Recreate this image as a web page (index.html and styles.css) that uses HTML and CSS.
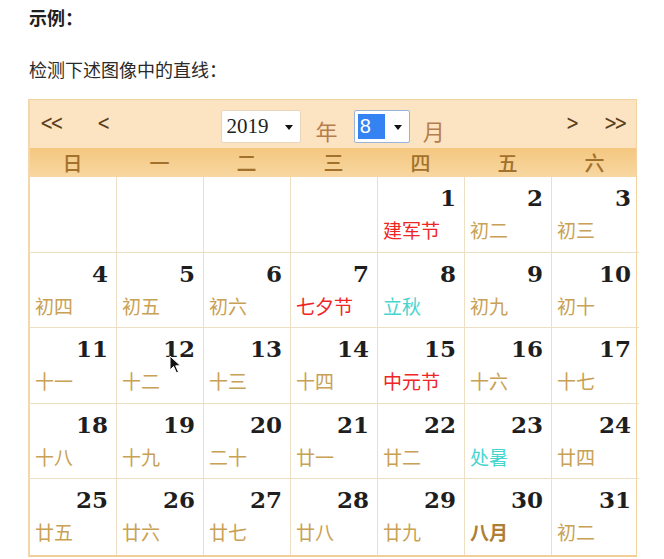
FILE: index.html
```html
<!DOCTYPE html>
<html lang="zh">
<head>
<meta charset="utf-8">
<link rel="stylesheet" href="styles.css">
</head>
<body>
<div class="page">
  <p class="title">示例：</p>
  <p class="desc">检测下述图像中的直线：</p>
  <div class="cal">
    <div class="head">
      <div class="nav left"><span class="dbl">&lt;&lt;</span><span class="sgl">&lt;</span></div>
      <div class="pick">
        <div class="sel year"><span>2019</span><i class="caret"></i></div>
        <span class="unit">年</span>
        <div class="sel month"><span class="hl">8</span><i class="caret"></i></div>
        <span class="unit unit-m">月</span>
      </div>
      <div class="nav right"><span class="sgl">&gt;</span><span class="dbl">&gt;&gt;</span></div>
    </div>
    <div class="week">
      <span>日</span><span>一</span><span>二</span><span>三</span><span>四</span><span>五</span><span>六</span>
    </div>
    <div class="grid">
      <div class="cell"></div><div class="cell"></div><div class="cell"></div><div class="cell"></div>
      <div class="cell"><b>1</b><em class="fest">建军节</em></div>
      <div class="cell"><b>2</b><em>初二</em></div>
      <div class="cell"><b>3</b><em>初三</em></div>

      <div class="cell"><b>4</b><em>初四</em></div>
      <div class="cell"><b>5</b><em>初五</em></div>
      <div class="cell"><b>6</b><em>初六</em></div>
      <div class="cell"><b>7</b><em class="fest">七夕节</em></div>
      <div class="cell"><b>8</b><em class="term">立秋</em></div>
      <div class="cell"><b>9</b><em>初九</em></div>
      <div class="cell"><b>10</b><em>初十</em></div>

      <div class="cell"><b>11</b><em>十一</em></div>
      <div class="cell"><b>12</b><em>十二</em></div>
      <div class="cell"><b>13</b><em>十三</em></div>
      <div class="cell"><b>14</b><em>十四</em></div>
      <div class="cell"><b>15</b><em class="fest">中元节</em></div>
      <div class="cell"><b>16</b><em>十六</em></div>
      <div class="cell"><b>17</b><em>十七</em></div>

      <div class="cell"><b>18</b><em>十八</em></div>
      <div class="cell"><b>19</b><em>十九</em></div>
      <div class="cell"><b>20</b><em>二十</em></div>
      <div class="cell"><b>21</b><em>廿一</em></div>
      <div class="cell"><b>22</b><em>廿二</em></div>
      <div class="cell"><b>23</b><em class="term">处暑</em></div>
      <div class="cell"><b>24</b><em>廿四</em></div>

      <div class="cell"><b>25</b><em>廿五</em></div>
      <div class="cell"><b>26</b><em>廿六</em></div>
      <div class="cell"><b>27</b><em>廿七</em></div>
      <div class="cell"><b>28</b><em>廿八</em></div>
      <div class="cell"><b>29</b><em>廿九</em></div>
      <div class="cell"><b>30</b><em class="month-start">八月</em></div>
      <div class="cell"><b>31</b><em>初二</em></div>
    </div>
    <svg class="cursor" width="14" height="20" viewBox="0 0 14 20"><path d="M1 1 L1 15 L4.5 11.5 L7.5 18 L9.5 17 L6.7 10.8 L11.5 10.8 Z" fill="#111" stroke="#fff" stroke-width="1"/></svg>
  </div>
</div>
</body>
</html>
```
FILE: styles.css
```css
* { box-sizing: border-box; }
html, body { margin: 0; padding: 0; background: #fff; }
body { font-family: "Noto Sans CJK SC", "Noto Sans", sans-serif; color: #222; }
.page { width: 664px; height: 559px; overflow: hidden; padding-top: 4px; }
.title { margin: 0 0 0 29px; font-size: 18px; font-weight: 700; line-height: 26px; color: #1e1e1e; }
.desc { margin: 26px 0 0 29px; font-size: 18px; line-height: 26px; color: #2a2a2a; }

.cal {
  position: relative;
  margin: 17px 0 0 28px;
  width: 609px;
  border: 1px solid #f2d3a0;
  border-bottom: 2px solid #f2cf98;
  border-left: 2px solid #f4d7a8;
}
.head {
  height: 48px;
  background: #fce4c2;
  display: flex;
  align-items: center;
  justify-content: space-between;
  padding: 0 8px 0 10px;
}
.nav { display: flex; align-items: center; color: #5b3f1c; font-family: "DejaVu Sans", sans-serif; font-size: 21px; line-height: 1; }
.nav.left .dbl { letter-spacing: -4px; width: 57px; }
.nav.right .sgl { width: 38px; }
.nav.right .dbl { letter-spacing: -4px; width: 24px; }
.nav span { transform: scaleX(0.75); transform-origin: left center; display: inline-block; padding-bottom: 2px; }
.pick { display: flex; align-items: center; margin-left: 106px; margin-right: auto; padding-top: 8px; }
.sel {
  height: 33px;
  background: #fff;
  border: 1px solid #e8d6ba;
  border-radius: 2px;
  display: flex;
  align-items: center;
  font-family: "Liberation Serif", serif;
  font-size: 21px;
  color: #222;
  position: relative;
  top: -2px;
}
.sel.year { width: 80px; padding-left: 5px; }
.sel.month { width: 56px; padding-left: 3px; border-color: #9ab3d8; }
.caret { position: absolute; right: 7px; top: 14px; width: 0; height: 0; border-left: 4px solid transparent; border-right: 4px solid transparent; border-top: 5px solid #111; }
.hl { background: #3583f2; color: #fff; width: 27px; height: 25px; line-height: 25px; padding-left: 2px; font-family: "Liberation Sans", sans-serif; font-size: 20px; }
.unit { font-size: 22px; color: #b67d4c; margin: 0 16px 0 15px; line-height: 1; position: relative; top: 2px; }
.unit-m { margin: 0 0 0 13px; }

.week {
  height: 29px;
  background: linear-gradient(#f4c77f, #f8d7a2);
  display: grid;
  grid-template-columns: repeat(7, 87px);
  align-items: center;
  text-align: center;
  color: #a2712c;
  font-size: 20px;
  font-weight: 500;
  line-height: 1;
}
.week span { padding-right: 2px; }
.grid { display: grid; grid-template-columns: repeat(7, 87px); grid-auto-rows: 75.6px; }
.cell {
  border-right: 1px solid #ecdfc4;
  border-bottom: 1px solid #ecdfc4;
  display: flex;
  flex-direction: column;
  padding: 7px 8px 0 5px;
}
.cell:nth-child(7n) { border-right: none; }
.cell:nth-last-child(-n+7) { border-bottom: none; }
.cell b { display: block; text-align: right; font-family: "DejaVu Serif", serif; font-weight: 700; font-size: 23px; line-height: 28px; color: #1e1e1e; }
.cell em { display: block; font-style: normal; font-size: 19px; line-height: 24px; margin-top: 6px; color: #c9a155; }
.cell em.fest { color: #ef2525; }
.cell em.term { color: #46d6cf; }
.cell em.month-start { color: #ad7e35; font-weight: 700; }
.cursor { position: absolute; left: 139px; top: 255px; }
```
